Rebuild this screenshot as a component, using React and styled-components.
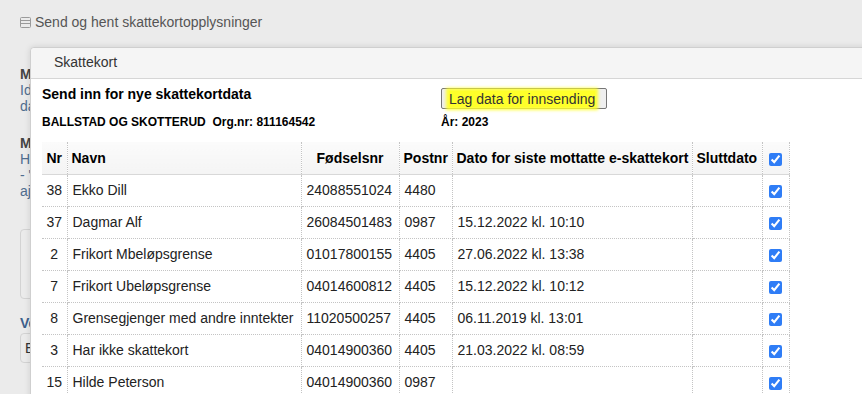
import React from "react";
import styled, { createGlobalStyle } from "styled-components";

const Global = createGlobalStyle`
  html, body { margin: 0; padding: 0; height: 394px; overflow: hidden; }
  body { background: #ebebeb; font-family: "Liberation Sans", Arial, sans-serif; color: #333; }
`;

const Page = styled.div`
  position: relative;
  height: 394px;
  padding: 12px 20px 0 20px;
  box-sizing: border-box;
  overflow: hidden;
`;

const PageTitle = styled.div`
  display: flex;
  align-items: center;
  gap: 4px;
  font-size: 14px;
  color: #555;
  height: 20px;
`;

const Section = styled.div`
  margin-top: ${(p) => p.$mt || 0}px;
  font-size: 14px;
  line-height: 16px;
`;

const SectionHead = styled.div`
  font-weight: bold;
  color: ${(p) => p.$color || "#444"};
`;

const SectionText = styled.div`
  color: #4f6d8f;
`;

const Box = styled.div`
  margin-top: ${(p) => p.$mt || 0}px;
  height: ${(p) => p.$h}px;
  width: 300px;
  border: 1px solid #d3d3d3;
  border-radius: 4px;
  box-sizing: border-box;
  display: flex;
  align-items: center;
  padding-left: 4px;
  font-size: 14px;
  color: #333;
`;

const Dialog = styled.div`
  position: absolute;
  left: 30px;
  top: 47px;
  width: 900px;
  height: 420px;
  background: #fff;
  border: 1px solid #cfcfcf;
  border-radius: 4px 0 0 0;
  box-shadow: 0 0 6px rgba(0, 0, 0, 0.12);
`;

const DialogHeader = styled.div`
  height: 31px;
  box-sizing: border-box;
  padding: 0 0 3px 23px;
  background: #f5f5f5;
  border-bottom: 1px solid #d6d6d6;
  display: flex;
  align-items: center;
  font-size: 14px;
  color: #333;
  border-radius: 4px 0 0 0;
`;

const DialogBody = styled.div`
  padding: 7px 0 0 11px;
`;

const InfoGrid = styled.div`
  display: grid;
  grid-template-columns: 399px auto;
  grid-template-rows: 24px 24px;
  align-items: center;
  color: #000;
`;

const Title = styled.div`
  font-size: 14px;
  line-height: 16px;
  font-weight: bold;
  align-self: start;
`;

const Meta = styled.div`
  font-size: 12px;
  font-weight: bold;
  white-space: pre;
`;

const Button = styled.button`
  justify-self: start;
  align-self: start;
  margin-top: 2px;
  height: 21px;
  width: 166px;
  padding: 0 7px;
  border: 1px solid #767676;
  border-radius: 2px;
  background: #efefef;
  font-family: "Liberation Sans", Arial, sans-serif;
  font-size: 14px;
  color: #333;
  text-align: left;
  white-space: nowrap;
`;

const Glow = styled.span`
  background: #ffff2a;
  box-shadow: 0 0 3px 3px rgba(255, 255, 42, 0.95);
`;

const Table = styled.table`
  margin-top: 8px;
  width: 747px;
  border-collapse: collapse;
  font-size: 14px;
  table-layout: fixed;
`;

const Th = styled.th`
  box-sizing: border-box;
  height: 32px;
  padding: 0 ${(p) => (p.$align === "center" ? 0 : 4)}px;
  width: ${(p) => p.$w}px;
  text-align: ${(p) => p.$align || "left"};
  font-weight: bold;
  color: #000;
  background: linear-gradient(#fbfbfb, #f4f4f4);
  border-bottom: 1px solid #d8d8d8;
  border-right: 1px dotted #c4c4c4;
  white-space: nowrap;
  overflow: hidden;
`;

const Td = styled.td`
  box-sizing: border-box;
  height: 32px;
  padding: 0 ${(p) => (p.$align === "center" ? 0 : 5)}px;
  text-align: ${(p) => p.$align || "left"};
  color: #222;
  border-bottom: 1px dotted #c4c4c4;
  border-right: 1px dotted #c4c4c4;
  white-space: nowrap;
  overflow: hidden;
`;

const Check = styled.input.attrs({ type: "checkbox", readOnly: true })`
  accent-color: #2f7df6;
  margin: 0;
  width: 13px;
  height: 13px;
  vertical-align: middle;
`;

const ListIcon = () => (
  <svg width="11" height="11" viewBox="0 0 11 11" fill="none" stroke="#9a9a9a" strokeWidth="1">
    <rect x="0.5" y="0.5" width="10" height="10" rx="1" />
    <line x1="0.5" y1="3.5" x2="10.5" y2="3.5" />
    <line x1="0.5" y1="6.5" x2="10.5" y2="6.5" />
  </svg>
);

const rows = [
  ["38", "Ekko Dill", "24088551024", "4480", ""],
  ["37", "Dagmar Alf", "26084501483", "0987", "15.12.2022 kl. 10:10"],
  ["2", "Frikort Mbeløpsgrense", "01017800155", "4405", "27.06.2022 kl. 13:38"],
  ["7", "Frikort Ubeløpsgrense", "04014600812", "4405", "15.12.2022 kl. 10:12"],
  ["8", "Grensegjenger med andre inntekter", "11020500257", "4405", "06.11.2019 kl. 13:01"],
  ["3", "Har ikke skattekort", "04014900360", "4405", "21.03.2022 kl. 08:59"],
  ["15", "Hilde Peterson", "04014900360", "0987", ""],
];

export default function App() {
  return (
    <>
      <Global />
      <Page>
        <PageTitle>
          <ListIcon />
          <span>Send og hent skattekortopplysninger</span>
        </PageTitle>
        <Section $mt={34}>
          <SectionHead>Mottak av skattekort</SectionHead>
          <SectionText>Identifikasjon av arbeidsgiver og</SectionText>
          <SectionText>data for innsending</SectionText>
        </Section>
        <Section $mt={21}>
          <SectionHead>Melding</SectionHead>
          <SectionText>Her kan du sende forespørsel</SectionText>
          <SectionText>- "Lag data for innsending"</SectionText>
          <SectionText>ajourfører skattekortene</SectionText>
        </Section>
        <Box $mt={30} $h={70} />
        <Section $mt={16}>
          <SectionHead $color="#3d5f8c">Velg</SectionHead>
        </Section>
        <Box $mt={2} $h={30}>E</Box>

        <Dialog>
          <DialogHeader>Skattekort</DialogHeader>
          <DialogBody>
            <InfoGrid>
              <Title>Send inn for nye skattekortdata</Title>
              <Button>
                <Glow>Lag data for innsending</Glow>
              </Button>
              <Meta>{"BALLSTAD OG SKOTTERUD  Org.nr: 811164542"}</Meta>
              <Meta>År: 2023</Meta>
            </InfoGrid>
            <Table>
              <thead>
                <tr>
                  <Th $w={25} $align="center">Nr</Th>
                  <Th $w={234}>Navn</Th>
                  <Th $w={98} $align="center">Fødselsnr</Th>
                  <Th $w={53}>Postnr</Th>
                  <Th $w={240}>Dato for siste mottatte e-skattekort</Th>
                  <Th $w={70}>Sluttdato</Th>
                  <Th $w={27} $align="center">
                    <Check checked />
                  </Th>
                </tr>
              </thead>
              <tbody>
                {rows.map((r, i) => (
                  <tr key={i}>
                    <Td $align="center">{r[0]}</Td>
                    <Td>{r[1]}</Td>
                    <Td>{r[2]}</Td>
                    <Td>{r[3]}</Td>
                    <Td>{r[4]}</Td>
                    <Td></Td>
                    <Td $align="center">
                      <Check checked />
                    </Td>
                  </tr>
                ))}
              </tbody>
            </Table>
          </DialogBody>
        </Dialog>
      </Page>
    </>
  );
}
